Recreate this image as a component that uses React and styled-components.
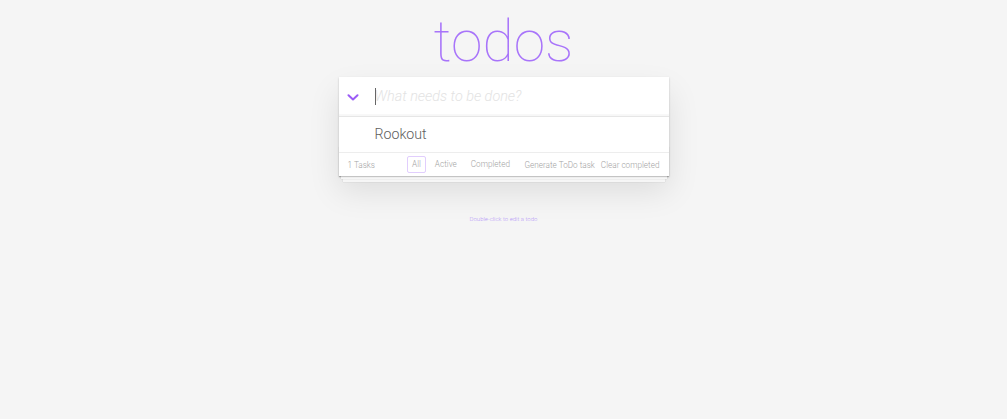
import React from "react";
import styled, { createGlobalStyle } from "styled-components";

const Global = createGlobalStyle`
  html, body { margin: 0; padding: 0; }
  body {
    background: #f5f5f5;
    font-family: Roboto, "Helvetica Neue", "Liberation Sans", Arial, sans-serif;
    font-weight: 300;
    color: #4d4d4d;
    -webkit-font-smoothing: antialiased;
  }
`;

const Page = styled.div`
  width: 330px;
  margin: 0 auto;
  padding-top: 13px;
`;

const Title = styled.h1`
  margin: 0;
  font-size: 57px;
  line-height: 57px;
  font-weight: 100;
  text-align: center;
  color: #a874fa;
`;

const Card = styled.section`
  margin-top: 7px;
  background: #fff;
  position: relative;
  box-shadow: 0 1px 2px 0 rgba(0, 0, 0, 0.2), 0 15px 30px 0 rgba(0, 0, 0, 0.1);
`;

const InputRow = styled.header`
  display: flex;
  align-items: center;
  height: 39px;
  position: relative;
  box-shadow: inset 0 -2px 1px rgba(0, 0, 0, 0.03);
`;

const Toggle = styled.div`
  width: 36px;
  box-sizing: border-box;
  display: flex;
  align-items: center;
  padding: 2px 0 0 8px;
`;

const NewTodo = styled.input`
  flex: 1;
  border: none;
  outline: none;
  padding: 0 10px 0 0;
  margin: 0;
  background: transparent;
  font-family: inherit;
  font-size: 14.4px;
  font-weight: 300;
  color: #4d4d4d;
  &::placeholder {
    font-style: italic;
    font-weight: 300;
    color: #e3e3e3;
  }
`;

const Caret = styled.span`
  position: absolute;
  left: 36px;
  top: 11px;
  width: 1px;
  height: 17px;
  background: #666;
`;

const List = styled.ul`
  list-style: none;
  margin: 0;
  padding: 0;
  border-top: 1px solid #e6e6e6;
`;

const Item = styled.li`
  border-bottom: 1px solid #ededed;
  padding: 9px 9px 9px 36px;
  font-size: 14.2px;
  line-height: 17px;
  color: #5e5e5e;
  font-weight: 300;
`;

const Footer = styled.footer`
  position: relative;
  display: flex;
  align-items: center;
  height: 23px;
  padding: 0 9px;
  font-size: 8.2px;
  color: #a3a3a3;
  &::before {
    content: "";
    position: absolute;
    left: 0;
    right: 0;
    bottom: 0;
    height: 30px;
    overflow: hidden;
    pointer-events: none;
    box-shadow: 0 1px 1px rgba(0, 0, 0, 0.2),
      0 5px 0 -2px #f6f6f6,
      0 5px 1px -2px rgba(0, 0, 0, 0.2),
      0 10px 0 -4px #f6f6f6,
      0 10px 1px -4px rgba(0, 0, 0, 0.2);
  }
`;

const Count = styled.span`
  position: relative;
`;

const Filters = styled.ul`
  position: relative;
  list-style: none;
  margin: 0 0 0 32px;
  padding: 0;
  display: flex;
  gap: 4px;
`;

const Filter = styled.a`
  display: block;
  padding: 2px 4px;
  line-height: 11px;
  border: 1px solid ${(p) => (p.$selected ? "rgba(168,116,250,0.35)" : "transparent")};
  border-radius: 2px;
  color: inherit;
  text-decoration: none;
`;

const FooterButton = styled.button`
  position: relative;
  border: none;
  background: none;
  padding: 0;
  margin: 0 0 0 ${(p) => p.$gap || "0"};
  font-family: inherit;
  font-weight: 300;
  font-size: 8.2px;
  color: #a3a3a3;
  cursor: pointer;
`;

const Info = styled.footer`
  margin-top: 39px;
  text-align: center;
  font-size: 6px;
  color: #b89af7;
`;

function Chevron() {
  return (
    <svg width="12" height="7" viewBox="0 0 12 7" fill="none">
      <path
        d="M1.5 1.2 L6 5.4 L10.5 1.2"
        stroke="#9b5cf6"
        strokeWidth="2"
        strokeLinecap="round"
        strokeLinejoin="round"
      />
    </svg>
  );
}

export default function App() {
  return (
    <>
      <Global />
      <Page>
        <Title>todos</Title>
        <Card>
          <InputRow>
            <Toggle>
              <Chevron />
            </Toggle>
            <NewTodo placeholder="What needs to be done?" />
            <Caret />
          </InputRow>
          <List>
            <Item>Rookout</Item>
          </List>
          <Footer>
            <Count>1 Tasks</Count>
            <Filters>
              <li><Filter href="#/" $selected>All</Filter></li>
              <li><Filter href="#/active">Active</Filter></li>
              <li><Filter href="#/completed">Completed</Filter></li>
            </Filters>
            <FooterButton $gap="auto">Generate ToDo task</FooterButton>
            <FooterButton $gap="6px">Clear completed</FooterButton>
          </Footer>
        </Card>
        <Info>Double-click to edit a todo</Info>
      </Page>
    </>
  );
}
